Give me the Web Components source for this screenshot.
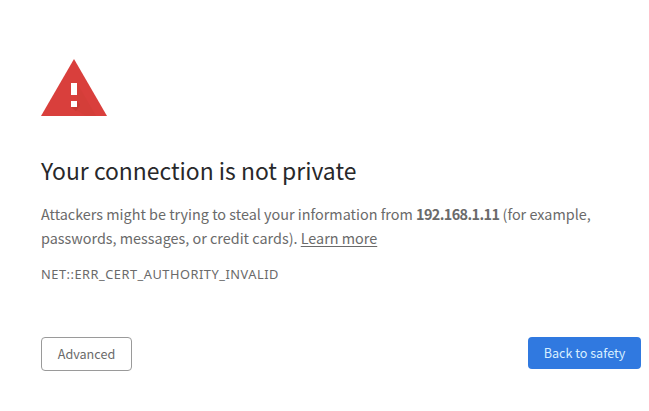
<!DOCTYPE html>
<html lang="en">
<head>
<meta charset="utf-8">
<title>Privacy error</title>
<style>
body {
  margin: 0;
  background: #fff;
  color: #6a6a6a;
  font-family: "Noto Sans CJK SC", "Noto Sans", sans-serif;
}
</style>
</head>
<body>
<ssl-interstitial>
  <warning-icon slot="icon"></warning-icon>
  <span slot="title">Your connection is not private</span>
  <warning-message slot="message" host="192.168.1.11"></warning-message>
  <span slot="code">NET::ERR_CERT_AUTHORITY_INVALID</span>
  <action-button slot="actions">Advanced</action-button>
  <action-button slot="actions" primary>Back to safety</action-button>
</ssl-interstitial>

<script>
class WarningIcon extends HTMLElement {
  constructor() {
    super();
    this.attachShadow({ mode: "open" });
    this.shadowRoot.innerHTML = `
      <style>
        :host { display: block; width: 66px; height: 57px; }
        svg { display: block; }
      </style>
      <svg width="66" height="57" viewBox="0 0 66 57">
        <path fill="#d93f3c" d="M33 0 66 57H0z"/>
        <path fill="#c93a36" d="M36 24 55 57H45L30 48l6-5z" opacity=".3"/>
        <path fill="#b8332e" d="M36 42l3 4-4 6-5-4z" opacity=".5"/>
        <path fill="#fff" d="M30 24h6v12h-6zM30 42h6v6h-6z"/>
      </svg>
    `;
  }
}

class WarningMessage extends HTMLElement {
  constructor() {
    super();
    this.attachShadow({ mode: "open" });
  }

  connectedCallback() {
    this.shadowRoot.innerHTML = `
      <style>
        :host {
          display: block;
          font-size: 14.4px;
          line-height: 24px;
        }
        b { letter-spacing: -0.6px; }
        a { color: inherit; text-decoration: underline; text-underline-offset: 2px; }
      </style>
      Attackers might be trying to steal your information from <b></b> (for example,<br>
      passwords, messages, or credit cards). <a href="#">Learn more</a>
    `;
    this.shadowRoot.querySelector("b").textContent = this.getAttribute("host");
  }
}

class ActionButton extends HTMLElement {
  constructor() {
    super();
    this.attachShadow({ mode: "open" });
    this.shadowRoot.innerHTML = `
      <style>
        :host { display: block; }
        button {
          display: block;
          box-sizing: border-box;
          width: 91px;
          height: 34px;
          padding: 0;
          border: 1px solid #9a9a9a;
          border-radius: 4px;
          background: #fff;
          color: #6a6a6a;
          font: 12.6px/32px "Noto Sans CJK SC", "Noto Sans", sans-serif;
          white-space: nowrap;
        }
        :host([primary]) button {
          width: 113px;
          height: 32px;
          border: none;
          background: #3079e0;
          color: #d8efff;
        }
      </style>
      <button><slot></slot></button>
    `;
  }
}

class SslInterstitial extends HTMLElement {
  constructor() {
    super();
    this.attachShadow({ mode: "open" });
    this.shadowRoot.innerHTML = `
      <style>
        :host { display: block; box-sizing: border-box; width: 649px; padding: 59px 8px 0 41px; }
        h1 {
          margin: 38px 0 0;
          color: #28282a;
          font-size: 22.9px;
          font-weight: 400;
          line-height: 32px;
        }
        #message { margin-top: 16px; white-space: nowrap; }
        #code {
          margin-top: 14px;
          font: 12.8px/20px "Noto Sans", sans-serif;
          letter-spacing: 0.52px;
        }
        #actions {
          display: flex;
          justify-content: space-between;
          margin-top: 53px;
        }
      </style>
      <slot name="icon"></slot>
      <h1><slot name="title"></slot></h1>
      <div id="message"><slot name="message"></slot></div>
      <div id="code"><slot name="code"></slot></div>
      <div id="actions"><slot name="actions"></slot></div>
    `;
  }
}

customElements.define("warning-icon", WarningIcon);
customElements.define("warning-message", WarningMessage);
customElements.define("action-button", ActionButton);
customElements.define("ssl-interstitial", SslInterstitial);
</script>
</body>
</html>
